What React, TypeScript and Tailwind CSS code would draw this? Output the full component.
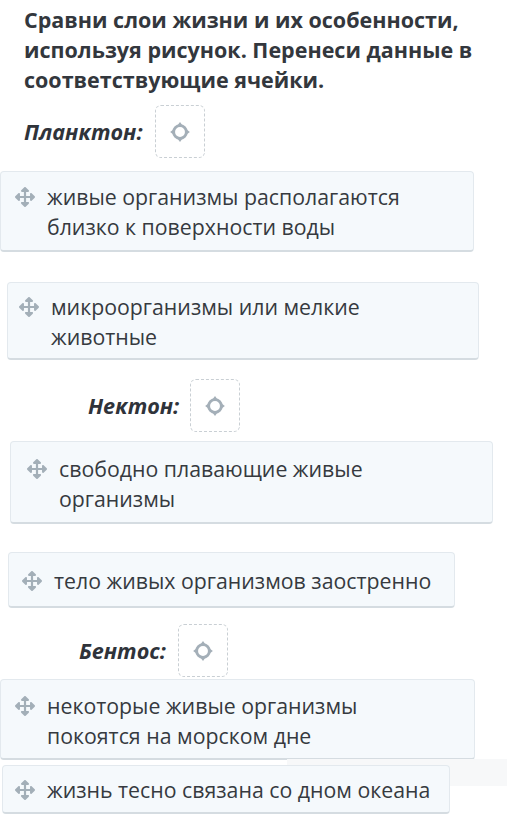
import { FaArrowsAlt } from "react-icons/fa";

const font = { fontFamily: "'Open Sans', 'Noto Sans', sans-serif" };

function Target() {
  return (
    <svg width="22" height="22" viewBox="0 0 20 20" className="text-[#a4afb8]">
      <circle cx="10" cy="10" r="5.8" fill="none" stroke="currentColor" strokeWidth="2.6" />
      <path d="M10 1 L13 5 L7 5 Z" fill="currentColor" />
      <path d="M10 19 L13 15 L7 15 Z" fill="currentColor" />
      <path d="M1 10 L5 7 L5 13 Z" fill="currentColor" />
      <path d="M19 10 L15 7 L15 13 Z" fill="currentColor" />
    </svg>
  );
}

function DropRow({ label, className, labelW }: { label: string; className: string; labelW: string }) {
  return (
    <div className={`flex items-center ${className}`}>
      <span className={`${labelW} text-[21.6px] font-bold italic text-[#2f333a] leading-[30px]`}>{label}</span>
      <div className="w-[50px] h-[53px] rounded-[6px] border border-dashed border-[#c9cfd4] flex items-center justify-center bg-white">
        <Target />
      </div>
    </div>
  );
}

function Card({ lines, className }: { lines: string[]; className: string }) {
  return (
    <div
      className={`flex items-start gap-[12px] bg-[#f5f9fc] border border-[#e3e9ee] border-b-2 border-b-[#d5dce1] rounded-[4px] ${className}`}
    >
      <FaArrowsAlt className="shrink-0 mt-[5px] text-[#a3afb8]" size={20} />
      <div className="text-[21.3px] leading-[30px] text-[#363a3f] whitespace-nowrap">
        {lines.map((l) => (
          <div key={l}>{l}</div>
        ))}
      </div>
    </div>
  );
}

export default function App() {
  return (
    <div className="w-[507px] h-[824px] bg-white overflow-hidden" style={font}>
      <h1 className="px-[24px] pt-[5px] text-[21.5px] font-bold leading-[30px] text-[#33373d]">
        Сравни слои жизни и их особенности, используя рисунок. Перенеси данные в соответствующие ячейки.
      </h1>

      <DropRow label="Планктон:" className="mt-[10px] ml-[24px]" labelW="w-[131px]" />

      <Card
        className="mt-[13px] ml-0 w-[474px] pl-[14px] pt-[10px] pb-[8px]"
        lines={["живые организмы располагаются", "близко к поверхности воды"]}
      />
      <Card
        className="mt-[30px] ml-[7px] w-[472px] pl-[11px] pt-[9px] pb-[6px]"
        lines={["микроорганизмы или мелкие", "животные"]}
      />

      <DropRow label="Нектон:" className="mt-[19px] ml-[88px]" labelW="w-[102px]" />

      <Card
        className="mt-[9px] ml-[10px] w-[483px] pl-[16px] pt-[12px] pb-[8px]"
        lines={["свободно плавающие живые", "организмы"]}
      />
      <Card
        className="mt-[28px] ml-[8px] w-[447px] pl-[13px] pt-[13px] pb-[10px]"
        lines={["тело живых организмов заостренно"]}
      />

      <DropRow label="Бентос:" className="mt-[16px] ml-[79px]" labelW="w-[99px]" />

      <Card
        className="mt-[2px] ml-0 w-[475px] pl-[14px] pt-[11px] pb-[7px]"
        lines={["некоторые живые организмы", "покоятся на морском дне"]}
      />
      <div className="relative">
        <div className="absolute right-0 top-[-6px] w-[220px] h-[27px] bg-[#f7f8f9]" />
        <Card
          className="relative mt-[5px] ml-[2px] w-[448px] pl-[12px] pt-[9px] pb-[7px]"
          lines={["жизнь тесно связана со дном океана"]}
        />
      </div>
    </div>
  );
}
